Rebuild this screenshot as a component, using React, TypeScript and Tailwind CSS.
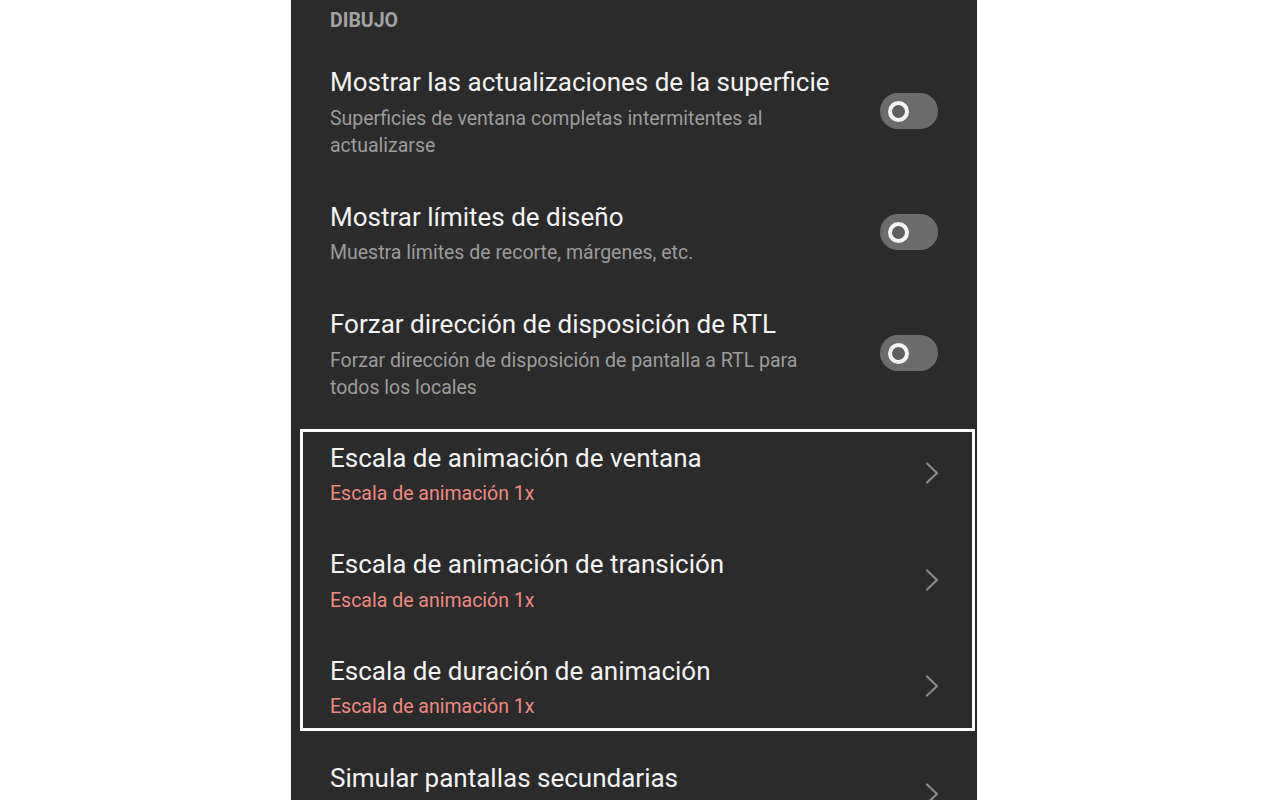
import React from "react"

function Toggle() {
  return (
    <div className="flex h-[36px] w-[58px] shrink-0 items-center rounded-full bg-[#6c6c6c] pl-[8px]">
      <div className="h-[21px] w-[21px] rounded-full border-[4px] border-[#f4f4f4] bg-[#5f5f5f]" />
    </div>
  )
}

function Chevron() {
  return (
    <svg width="14" height="22" viewBox="0 0 14 22" className="shrink-0" fill="none">
      <path d="M2 1.5 L12 11 L2 20.5" stroke="#8a8a8a" strokeWidth="2.2" strokeLinecap="round" strokeLinejoin="round" />
    </svg>
  )
}

function Texts({ title, sub, accent }: { title: string; sub?: string; accent?: boolean }) {
  return (
    <div className="min-h-[67.5px] min-w-0 flex-1">
      <div className="text-[26px] leading-[36px] text-[#f3f3f3]">{title}</div>
      {sub && (
        <div className={"mt-[4.5px] text-[19.5px] leading-[27px] " + (accent ? "text-[#ef8a7f]" : "text-[#9c9c9c]")}>
          {sub}
        </div>
      )}
    </div>
  )
}

function SwitchRow({ title, sub }: { title: string; sub: string }) {
  return (
    <div className="flex items-center px-[39px] py-[20px]">
      <Texts title={title} sub={sub} />
      <div className="ml-[40px]">
        <Toggle />
      </div>
    </div>
  )
}

function LinkRow({ title, sub }: { title: string; sub: string }) {
  return (
    <div className="flex items-center">
      <Texts title={title} sub={sub} accent />
      <Chevron />
    </div>
  )
}

export default function App() {
  return (
    <div className="h-[800px] overflow-hidden bg-white" style={{ fontFamily: "Roboto, 'Noto Sans', sans-serif" }}>
      <div className="mx-auto h-full w-[686px] bg-[#2b2b2b]">
        <div className="pl-[39px] pt-[9px] text-[19.5px] font-bold leading-[24px] text-[#a3a3a3]">DIBUJO</div>
        <div className="mt-[11px]">
          <SwitchRow
            title="Mostrar las actualizaciones de la superficie"
            sub="Superficies de ventana completas intermitentes al actualizarse"
          />
          <SwitchRow title="Mostrar límites de diseño" sub="Muestra límites de recorte, márgenes, etc." />
          <SwitchRow
            title="Forzar dirección de disposición de RTL"
            sub="Forzar dirección de disposición de pantalla a RTL para todos los locales"
          />
        </div>

        {/* recuadro resaltado */}
        <div className="mb-[9px] ml-[9px] mr-[2px] mt-[8px] flex flex-col gap-[39px] border-[3px] border-white py-[8px] pl-[27px] pr-[33px]">
          <LinkRow title="Escala de animación de ventana" sub="Escala de animación 1x" />
          <LinkRow title="Escala de animación de transición" sub="Escala de animación 1x" />
          <LinkRow title="Escala de duración de animación" sub="Escala de animación 1x" />
        </div>

        <div className="flex items-center py-[20px] pl-[39px] pr-[38px]">
          <Texts title="Simular pantallas secundarias" />
          <Chevron />
        </div>
      </div>
    </div>
  )
}
